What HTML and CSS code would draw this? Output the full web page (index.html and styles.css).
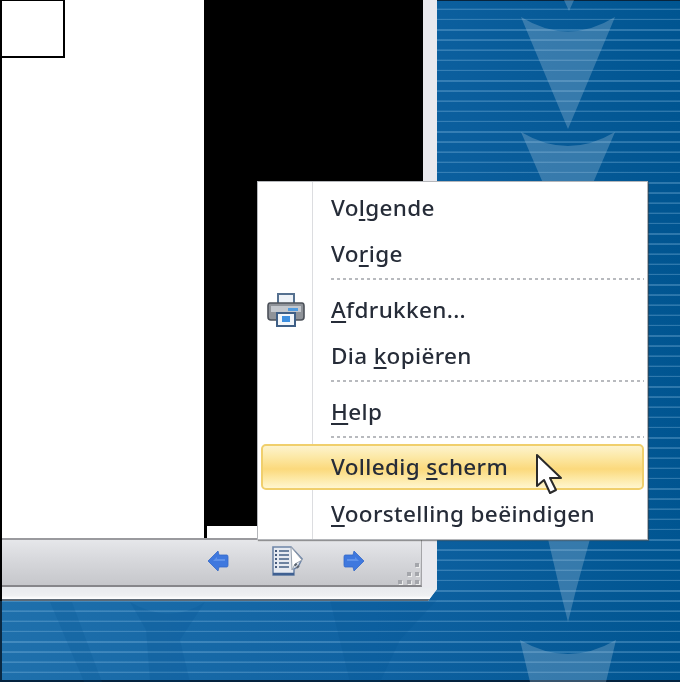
FILE: index.html
```html
<!DOCTYPE html>
<html lang="nl">
<head>
    <meta charset="UTF-8">
    <meta name="viewport" content="width=device-width, initial-scale=1.0">
    <title>Volledig scherm</title>
    <link rel="stylesheet" href="styles.css">
</head>
<body>
    <div class="stage">
        <!-- Achtergrond -->
        <svg class="backdrop" width="680" height="682" viewBox="0 0 680 682">
            <g fill="#a9c6dc" opacity="0.3">
                <path d="M521 17 Q568 46 615 17 L576 110 L568 129 L560 110 Z"/>
                <path d="M521 132 Q568 160 615 132 L590 190 L546 190 Z"/>
                <path d="M564 0 H574 L569 11 Z"/>
                <path d="M520 640 Q568 668 616 640 L606 682 H530 Z"/>
                <path d="M548 539 H590 L576 590 L568 622 L560 590 Z"/>
            </g>
            <g fill="#00508f" opacity="0.16">
                <path d="M50 602 H72 L102 682 H84 Z"/>
                <path d="M130 602 Q170 625 205 602 L180 640 L190 682 H150 L146 630 Z"/>
                <path d="M330 600 H437 L400 640 L380 682 H350 Z"/>
            </g>
        </svg>

        <!-- Diavoorstelling venster -->
        <div class="window">
            <div class="slide-area">
                <div class="slide">
                    <div class="slide-box"></div>
                </div>
                <div class="slide-black">
                    <div class="slide-notch"></div>
                </div>
            </div>
            <div class="toolbar">
                <svg class="tool-arrow" width="22" height="22" viewBox="0 0 22 22">
                    <path d="M1 11 L11 1 L12 5 H20 Q21 5 21 7 V15 Q21 17 20 17 H12 L11 21 Z" fill="#3f78de" stroke="#3468c8" stroke-width="0.8" stroke-linejoin="round"/>
                    <path d="M6 11 L10 7 V9 H18 V11 Z" fill="#5f92ea"/>
                </svg>
                <svg class="tool-notes" width="32" height="32" viewBox="0 0 32 32">
                    <path d="M2 2 H20 L31 14 L27 22 L23 24 V30 H2 Z" fill="#e6eaf1" stroke="#6f86a8" stroke-width="1.6"/>
                    <path d="M2 29 H23" stroke="#3f6092" stroke-width="2.4"/>
                    <path d="M20 2 L31 15 L24 19 L21 25 Z" fill="#fff" stroke="#98a2ae"/>
                    <path d="M24 19 L28 23" stroke="#5d6570" stroke-width="3" stroke-dasharray="2 1"/>
                    <path d="M8 6 H18 M8 10 H18 M8 14 H18 M8 18 H18 M8 22 H18" stroke="#6c82a0" stroke-width="1.8"/>
                    <path d="M4 6 H6 M4 10 H6 M4 14 H6 M4 18 H6 M4 22 H6" stroke="#465a7c" stroke-width="1.8"/>
                </svg>
                <svg class="tool-arrow tool-next" width="22" height="22" viewBox="0 0 22 22">
                    <path d="M21 11 L11 1 L10 5 H2 Q1 5 1 7 V15 Q1 17 2 17 H10 L11 21 Z" fill="#3f78de" stroke="#3468c8" stroke-width="0.8" stroke-linejoin="round"/>
                    <path d="M4 9 H12 V7 L16 11 H4 Z" fill="#5f92ea"/>
                </svg>
                <div class="grip">
                    <i></i><i></i><i></i><i></i><i></i><i></i>
                </div>
            </div>
            <div class="window-foot"></div>
        </div>

        <!-- Contextmenu -->
        <div class="menu">
            <div class="menu-item">Vo<u>l</u>gende</div>
            <div class="menu-item">Vo<u>r</u>ige</div>
            <div class="menu-sep"></div>
            <div class="menu-item">
                <svg class="menu-icon" width="38" height="36" viewBox="0 0 38 36">
                    <path d="M11 2 H27 V13 H11 Z" fill="#eef2f7" stroke="#55708f" stroke-width="2"/>
                    <path d="M3 11 H35 Q37 11 37 14 V25 Q37 28 34 28 H4 Q1 28 1 25 V14 Q1 11 3 11 Z" fill="#8f9399" stroke="#4c5159" stroke-width="1.6"/>
                    <path d="M4 14 H34 V20 H4 Z" fill="#c3c7cd"/>
                    <path d="M21 16 H31 V19 H21 Z" fill="#4f9be0"/>
                    <path d="M10 21 H28 V34 H10 Z" fill="#f2f6fa" stroke="#3f5f86" stroke-width="2"/>
                    <path d="M15 24 H23 V30 H15 Z" fill="#3d8fe0"/>
                </svg>
                <u>A</u>fdrukken...
            </div>
            <div class="menu-item">Dia <u>k</u>opiëren</div>
            <div class="menu-sep"></div>
            <div class="menu-item"><u>H</u>elp</div>
            <div class="menu-sep menu-sep-low"></div>
            <div class="menu-item menu-item-active">Volledig <u>s</u>cherm</div>
            <div class="menu-item"><u>V</u>oorstelling beëindigen</div>
        </div>

        <!-- Muisaanwijzer -->
        <svg class="cursor" width="28" height="42" viewBox="0 0 28 42">
            <path d="M2 2 V33 L9 27 L15 40 L21 37 L15 25 L26 25 Z" fill="#fff" stroke="#2a2a2a" stroke-width="2" stroke-linejoin="round"/>
        </svg>
    </div>
</body>
</html>
```

FILE: styles.css
```css
/* Algemeen */
html, body {
    margin: 0;
    padding: 0;
}

body {
    width: 680px;
    height: 682px;
    overflow: hidden;
    background: #000;
    font-family: 'Noto Sans', Tahoma, sans-serif;
}

.stage {
    position: relative;
    width: 680px;
    height: 682px;
    overflow: hidden;
    filter: blur(0.7px);
    background-color: #0a5c9c;
    background-image:
        repeating-linear-gradient(180deg, transparent 0, transparent 8.2px, rgba(150, 200, 235, 0.3) 9px, rgba(150, 200, 235, 0.3) 10.2px),
        linear-gradient(90deg, #1f70ac 0%, #0f62a2 55%, #005591 100%);
    box-shadow: inset 0 1px #08243c, inset 0 -2px #04233f, inset 2px 0 #0a2a44;
}

.backdrop {
    position: absolute;
    top: 0;
    left: 0;
}

/* Venster */
.window {
    position: relative;
    box-sizing: border-box;
    width: 437px;
    height: 601px;
    border-left: 2px solid #000;
    background: #e9e9ee;
    clip-path: polygon(0 0, 100% 0, 100% 589px, 428px 100%, 0 100%);
}

.slide-area {
    display: flex;
    height: 538px;
    padding-right: 14px;
}

.slide {
    width: 202px;
    background: #fff;
}

.slide-box {
    box-sizing: border-box;
    width: 63px;
    height: 58px;
    border-right: 2px solid #000;
    border-bottom: 2px solid #000;
    border-top: 1px solid #000;
}

.slide-black {
    flex: 1;
    display: flex;
    align-items: flex-end;
    background: #000;
}

.slide-notch {
    width: 100%;
    height: 12px;
    margin-left: 3px;
    background: #fff;
}

.toolbar {
    position: relative;
    display: flex;
    align-items: center;
    box-sizing: border-box;
    width: 420px;
    height: 49px;
    padding: 0 0 4px 205px;
    border-top: 2px solid #9a9a9e;
    border-bottom: 2px solid #86868a;
    border-right: 1px solid #a4a4a8;
    background: linear-gradient(180deg, #e6e7ea 0%, #d8d9dd 40%, #c6c7cb 100%);
}

.tool-arrow {
    flex: none;
}

.tool-notes {
    flex: none;
    margin-left: 42px;
}

.tool-next {
    margin-left: 40px;
}

.grip {
    position: absolute;
    right: 2px;
    bottom: 1px;
    display: grid;
    grid-template-columns: repeat(3, 4px);
    grid-template-rows: repeat(3, 4px);
    gap: 4.5px;
}

.grip i {
    background: #a4a6ab;
    box-shadow: 1px 1px #eceded;
}

.grip i:nth-child(1) {
    grid-column: 3;
}

.grip i:nth-child(2) {
    grid-column: 2;
}

.grip i:nth-child(4) {
    grid-column: 1;
}

.window-foot {
    height: 12px;
    background: linear-gradient(180deg, #e8eaee 0%, #eef0f2 70%, #fff 100%);
    border-bottom: 2px solid #5d6a76;
}

/* Menu */
.menu {
    position: absolute;
    top: 181px;
    left: 257px;
    box-sizing: border-box;
    width: 391px;
    height: 359px;
    padding: 3px 3px;
    background: linear-gradient(90deg, #fff 0, #fff 54px, #dcdde0 54px, #dcdde0 55.5px, #fff 55.5px);
    border: 1px solid #b4b6ba;
    box-shadow: 1px 1px 1px rgba(60, 60, 60, 0.5);
}

.menu-item {
    position: relative;
    box-sizing: border-box;
    height: 46px;
    padding-left: 70px;
    font-size: 22.5px;
    font-weight: 500;
    line-height: 46px;
    letter-spacing: 0.35px;
    color: #262c38;
    white-space: nowrap;
}

.menu-item u {
    text-decoration-thickness: 2px;
    text-underline-offset: 3px;
}

.menu-item-active {
    margin-bottom: 1px;
    border: 2px solid #f0cf6c;
    border-radius: 5px;
    padding-left: 68px;
    line-height: 42px;
    background: linear-gradient(180deg, #fdf3cd 0%, #fce9a8 25%, #fbd97c 55%, #fde9a6 78%, #fff6cf 100%);
}

.menu-icon {
    position: absolute;
    top: 5px;
    left: 6px;
}

.menu-sep {
    height: 10px;
    margin-left: 70px;
    background: linear-gradient(90deg, #b8babe 50%, transparent 50%) 0 1px / 6px 2px repeat-x;
}

.menu-sep-low {
    height: 9px;
}

.cursor {
    position: absolute;
    top: 453px;
    left: 535px;
}
```
